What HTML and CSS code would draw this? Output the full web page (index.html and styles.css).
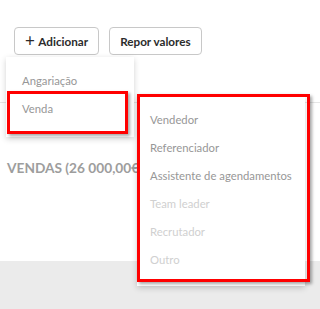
FILE: index.html
```html
<!DOCTYPE html>
<html lang="pt">
<head>
    <meta charset="UTF-8">
    <title>Comissões</title>
    <link rel="stylesheet" href="styles.css">
</head>
<body>
    <div class="page">
        <div class="toolbar">
            <button class="btn"><span class="plus">+</span> Adicionar</button>
            <button class="btn">Repor valores</button>
        </div>
        <div class="table-head"></div>
        <h3 class="section-title">VENDAS (26 000,00€)</h3>
    </div>
    <div class="footer"></div>

    <ul class="menu menu-main">
        <li>Angariação</li>
        <li>Venda</li>
    </ul>
    <ul class="menu menu-sub">
        <li>Vendedor</li>
        <li>Referenciador</li>
        <li>Assistente de agendamentos</li>
        <li class="disabled">Team leader</li>
        <li class="disabled">Recrutador</li>
        <li class="disabled">Outro</li>
    </ul>

    <div class="mark mark-venda"></div>
    <div class="mark mark-sub"></div>
</body>
</html>
```

FILE: styles.css
```css
/* Global */
body {
    font-family: 'Lato', 'Open Sans', sans-serif;
    margin: 0;
    padding: 0;
    background-color: #ffffff;
}

.page {
    height: 261px;
    background: #ffffff;
}

.footer {
    height: 48px;
    background: #ebebeb;
}

/* Toolbar */
.toolbar {
    display: flex;
    gap: 10px;
    padding: 27px 0 0 14px;
}

.btn {
    height: 28px;
    padding: 0 10px;
    background: #ffffff;
    border: 1px solid #c8c8c8;
    border-radius: 4px;
    font-family: 'Lato', sans-serif;
    font-size: 11.7px;
    font-weight: 700;
    color: #2b2b2b;
}

.btn .plus {
    font-size: 17px;
    font-weight: 400;
    line-height: 0;
    position: relative;
    top: 1px;
    margin-right: 1px;
}

.table-head {
    margin-top: 47px;
    border-bottom: 1px solid #e6e6e6;
}

.section-title {
    margin: 56px 0 0 7px;
    font-size: 13.7px;
    font-weight: 700;
    color: #9d9d9d;
}

/* Dropdown menus */
.menu {
    position: absolute;
    list-style: none;
    margin: 0;
    background: #ffffff;
    box-shadow: 0 2px 6px rgba(0, 0, 0, 0.18);
}

.menu li {
    height: 28px;
    line-height: 28px;
    font-size: 11.3px;
    color: #979797;
    white-space: nowrap;
}

.menu li.disabled {
    color: #d0d0d0;
}

.menu-main {
    left: 6px;
    top: 57px;
    width: 128px;
    padding: 10px 0 14px 16px;
    box-sizing: border-box;
}

.menu-sub {
    left: 137px;
    top: 95px;
    width: 168px;
    padding: 11px 0 12px 13px;
    box-sizing: border-box;
}

/* Highlight marks */
.mark {
    position: absolute;
    border: 3px solid #ff0000;
    box-shadow: 2px 2px 3px rgba(0, 0, 0, 0.35);
}

.mark-venda {
    left: 7px;
    top: 91px;
    width: 115px;
    height: 37px;
}

.mark-sub {
    left: 137px;
    top: 94px;
    width: 167px;
    height: 182px;
}
```
